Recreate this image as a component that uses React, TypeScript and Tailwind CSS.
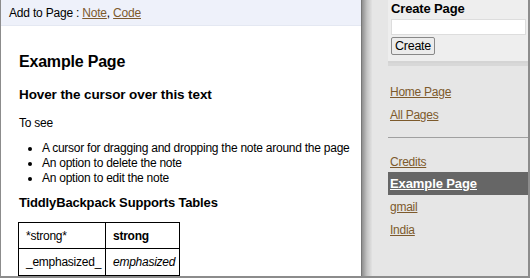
import { FC } from 'react'

const linkCls = "text-[#7d5a2c] underline"

const App: FC = () => {
  return (
    <div className="w-[530px] h-[278px] flex overflow-hidden border-l border-r-2 border-b-2 border-[#8c8c8c] bg-white font-['Liberation_Sans',Arial,sans-serif] text-[12px] tracking-[-0.25px] text-black">
      {/* main page */}
      <div className="w-[361px] shrink-0 flex flex-col border-r border-[#777]">
        <div className="h-[26px] shrink-0 bg-[#eef1fa] flex items-center pl-[8px] text-[12px] tracking-[-0.2px] border-b border-[#e4e8f2]">
          Add to Page :&nbsp;<a className={linkCls}>Note</a>,&nbsp;<a className={linkCls}>Code</a>
        </div>
        <div className="pl-[18px] pt-[26px]">
          <h1 className="text-[16px] font-bold leading-[20px] tracking-[-0.2px]">Example Page</h1>
          <h2 className="text-[13.5px] font-bold mt-[14px] leading-[18px] tracking-[-0.1px]">Hover the cursor over this text</h2>
          <p className="mt-[12px] leading-[15px]">To see</p>
          <ul className="mt-[10px] list-disc pl-[23px] leading-[15px]">
            <li>A cursor for dragging and dropping the note around the page</li>
            <li>An option to delete the note</li>
            <li>An option to edit the note</li>
          </ul>
          <h3 className="text-[13px] font-bold mt-[8px] leading-[18px] tracking-[-0.15px]">TiddlyBackpack Supports Tables</h3>
          <table className="mt-[10px] -ml-px border-collapse border border-black">
            <tbody>
              <tr className="h-[26px]">
                <td className="border border-black w-[87px] pl-[7px]">*strong*</td>
                <td className="border border-black w-[74px] pl-[7px] font-bold">strong</td>
              </tr>
              <tr className="h-[27px]">
                <td className="border border-black pl-[7px]">_emphasized_</td>
                <td className="border border-black pl-[7px] italic">emphasized</td>
              </tr>
            </tbody>
          </table>
        </div>
      </div>
      {/* divider shadow */}
      <div className="w-[10px] shrink-0 bg-gradient-to-r from-[#8f8f8f] via-[#c4c4c4] to-[#e2e2e2]" />
      {/* sidebar */}
      <div className="flex-1 bg-[#e6e6e6] flex flex-col">
        <div className="ml-[16px] bg-[#eeeeee] pl-[3px] pr-[2px] pb-[6px] border-b-2 border-[#d4d4d4]">
          <div className="text-[13px] font-bold leading-[17px] tracking-[-0.15px]">Create Page</div>
          <input className="block w-full h-[16px] bg-white border border-[#ddd] mt-[2px]" />
          <button className="mt-[2px] h-[18px] px-[3px] text-[12.5px] leading-[14px] bg-[#ececec] border border-[#888] rounded-[2px]">Create</button>
        </div>
        <div className="h-[3px] bg-[#d8d8d8] ml-[16px]" />
        <div className="pl-[18px] pt-[19px] flex flex-col gap-[9px] leading-[14px]">
          <a className={linkCls}>Home Page</a>
          <a className={linkCls}>All Pages</a>
        </div>
        <div className="mt-[15px] ml-[16px] h-px bg-[#a0a0a0]" />
        <div className="mt-[17px] flex flex-col leading-[14px]">
          <a className={`${linkCls} pl-[18px]`}>Credits</a>
          <div className="mt-[3px] ml-[16px] h-[23px] bg-[#666666] flex items-center pl-[2px]">
            <a className="text-white underline font-bold text-[13px] tracking-[-0.1px]">Example Page</a>
          </div>
          <a className={`${linkCls} pl-[18px] mt-[5px]`}>gmail</a>
          <a className={`${linkCls} pl-[18px] mt-[9px]`}>India</a>
        </div>
      </div>
    </div>
  )
}

export default App
